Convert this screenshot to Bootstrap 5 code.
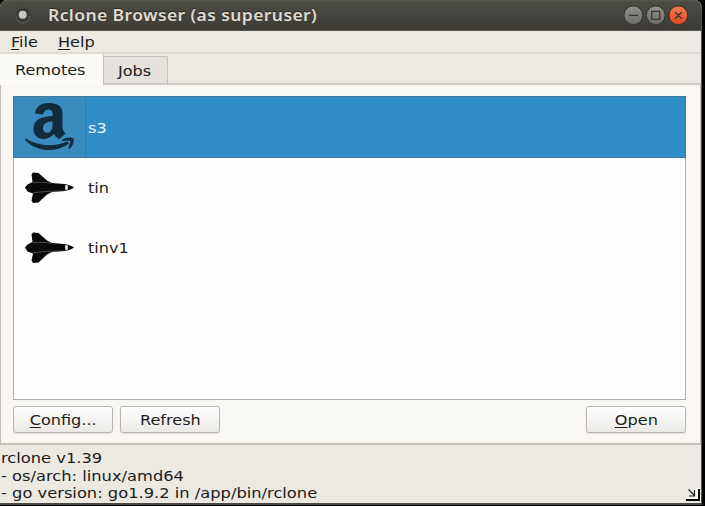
<!DOCTYPE html>
<html lang="en">
<head>
<meta charset="utf-8">
<title>Rclone Browser</title>
<link href="https://cdn.jsdelivr.net/npm/bootstrap@5.3.0/dist/css/bootstrap.min.css" rel="stylesheet">
<style>
body{background:#000;font:14.5px/17.5px "DejaVu Sans",sans-serif;color:#1c1c1b;overflow:hidden;height:506px}
.window{width:702px;height:505px;background:#ece9e3;border-right:1px solid #55534e;border-bottom:2px solid #4a4945;border-radius:7px 7px 0 0;overflow:hidden}
.wide{display:inline-block;transform:scaleX(1.11);transform-origin:0 50%;white-space:pre}
.titlebar{height:31px;background:linear-gradient(#57564f 0,#4c4b44 2px,#3c3b37 30px,#56554c 30px);padding-left:13px;padding-right:13px}
.titlebar h1{font:600 16.5px/28px "Noto Sans",sans-serif;color:#dfdbd2;margin:0 0 1px 15px;letter-spacing:.36px;white-space:nowrap;text-shadow:0 -1px #292825;transform:scaleX(1.063);transform-origin:0 50%}
.menu{height:23px;padding:3px 0 0 11px;border-bottom:2px solid #dedad4}
.menu a{color:inherit;text-decoration:none}
.menu a:first-child{width:47px}
u{text-decoration-thickness:1px;text-underline-offset:2px}
.tabs{height:31px;border-bottom:2px solid #ccc8c1}
.tab-on{width:104px;height:31px;background:#fbfaf6;padding:8px 0 0 15px;border-right:1px solid #c1bdb6;border-radius:0 2px 0 0}
.tab-off{width:64px;height:27px;margin-top:2px;background:#e5e2dd;padding:6px 0 0 14px;border:1px solid #c5c1bb;border-left:0;border-bottom:0;border-radius:0 2px 0 0}
.pane{height:361px;background:#f9f7f3;padding:11px 14px 0 12px;border:1px solid #c4c0b9;border-top:0;border-bottom:2px solid #c4c1bb}
.remotes{height:304px;border:1px solid #b1aea8;background:#fdfdfd}
.remote{height:60px;padding-left:10px}
.remote svg{width:52px;height:52px;flex:none}
.remote .wide{margin:4px 0 0 12px}
.picked{background:linear-gradient(90deg,#398bbd 0,#398bbd 71px,#2e7fac 71px,#2e7fac 72px,#308cc6 72px);color:#eaf5fb;box-shadow:0 0 0 1px #427a9c}
.actions{margin-top:6px;gap:7px}
.push{width:100px;height:27px;padding:3px 0 0;border:1px solid #b9b6b0;border-radius:3px;background:linear-gradient(#fff,#ebe9e6);font-size:14.5px;line-height:17px;color:#1c1c1b;box-shadow:0 1px 1px #e2dfda}
.push .wide{transform-origin:50% 50%}
.status{height:58px;padding:4px 0 0 1px}
.status .wide{margin-top:1px;transform:scaleX(1.123)}
.grip{width:14px;height:14px;margin:39px 1px 0 0;flex:none}
</style>
<script src="https://cdn.jsdelivr.net/npm/bootstrap@5.3.0/dist/js/bootstrap.bundle.min.js"></script>
</head>
<body>
<main class="window d-flex flex-column">
<header class="titlebar d-flex align-items-center">
<svg width="20" height="20" viewBox="0 0 20 20"><circle cx="10" cy="10" r="7.5" fill="#3c3b37"/><path d="M3 11a7 7 0 0 0 14 0" fill="none" stroke="#5f5e57"/><circle cx="9.7" cy="9.7" r="4" fill="#c8c6c2"/></svg>
<h1>Rclone Browser (as superuser)</h1>
<svg class="ms-auto" width="64" height="20" viewBox="0 0 64 20">
<defs><linearGradient id="g" x2="0" y2="1"><stop stop-color="#92918b"/><stop offset="1" stop-color="#6c6b65"/></linearGradient><linearGradient id="o" x2="0" y2="1"><stop stop-color="#f37b54"/><stop offset="1" stop-color="#df4b1c"/></linearGradient></defs>
<g stroke="#33322e"><circle cx="9.3" cy="10.3" r="9.4" fill="url(#g)"/><circle cx="31.700" cy="10.3" r="9.4" fill="url(#g)"/><circle cx="54.3" cy="10.3" r="9.4" fill="url(#o)"/></g>
<path d="M5 10.3h9M27.7 6.3h8v8h-8zM51 7l6.8 6.8M57.8 7L51 13.8" fill="none" stroke="#3b3935" stroke-width="1.3"/></svg>
</header>
<nav class="menu d-flex"><a href="#"><span class="wide"><u>F</u>ile</span></a><a href="#"><span class="wide"><u>H</u>elp</span></a></nav>
<div class="tabs d-flex"><div class="tab-on"><span class="wide">Remotes</span></div><div class="tab-off"><span class="wide">Jobs</span></div></div>
<section class="pane">
<div class="remotes">
<div class="remote picked d-flex align-items-center">
<svg viewBox="0 0 52 52"><path d="M11 12.500C12 5 17.500 2 25 2c9 0 13.500 4 13.500 10.500v13c0 3.500 1 5 3 7L35.500 38c-3-1.300-4.300-3-5.500-5-8 8.500-20.500 5.500-20.500-5 0-9 7-12.500 19-13V12c0-4.500-8-5-9.500 1.500zM28.500 20.500c-6.500 0-9.500 2.500-9.500 7 0 6 9.500 6.500 9.500-3z" fill="#102c3d"/><path d="M1.800 37.500C15 45.500 30 46.500 43.500 40.200l1.600 2.300C31 52.500 13 51 .8 39z" fill="#102c3d"/><path d="M38 39c4-3 10.500-3 11.700-1.300.6 3.300-1 7.300-4.200 10.300l-1.400-.7c1.500-3.300 2.500-6.200 2-7.300-1-1-4.200-.4-7.900.4z" fill="#102c3d"/></svg>
<span class="wide">s3</span></div>
<div class="remote d-flex align-items-center">
<svg viewBox="0 0 52 52"><g id="shuttle"><path d="M1 26.500L3.500 23.500 8.500 21 7.500 13.500 9 11.500 14.500 12 23 19.500 28 22 40 23Q46.500 24 50 26.500 46.500 29 40 30L28 31 23 33.500 14.500 41.500 9 42 7.500 39.500 9 32.500 3.500 30.500z" fill="#090909"/><path d="M9 21.600Q18 20.600 28 22.200M9 31.800Q22 29.800 39 30" stroke="#777" stroke-width=".6" fill="none"/><path d="M41.200 24.200h2.600v4.600h-2.600z" fill="#eee"/></g></svg>
<span class="wide">tin</span></div>
<div class="remote d-flex align-items-center">
<svg viewBox="0 0 52 52"><use href="#shuttle"/></svg>
<span class="wide">tinv1</span></div>
</div>
<div class="d-flex actions"><button class="btn push"><span class="wide"><u>C</u>onfig...</span></button><button class="btn push"><span class="wide">Refresh</span></button><button class="btn push ms-auto"><span class="wide"><u>O</u>pen</span></button></div>
</section>
<footer class="status d-flex justify-content-between"><div><span class="wide">rclone v1.39
- os/arch: linux/amd64
- go version: go1.9.2 in /app/bin/rclone</span></div>
<svg class="grip" viewBox="0 0 14 14"><path d="M0 13V9.500h9.500V0H14v13z" fill="#fff"/><path d="M0 12h13V1" fill="none" stroke="#000" stroke-width="2"/><path d="M2.500 1.500l6 6M8.500 2v6H3" fill="none" stroke="#222" stroke-width="1.200"/></svg>
</footer>
</main>
</body>
</html>
